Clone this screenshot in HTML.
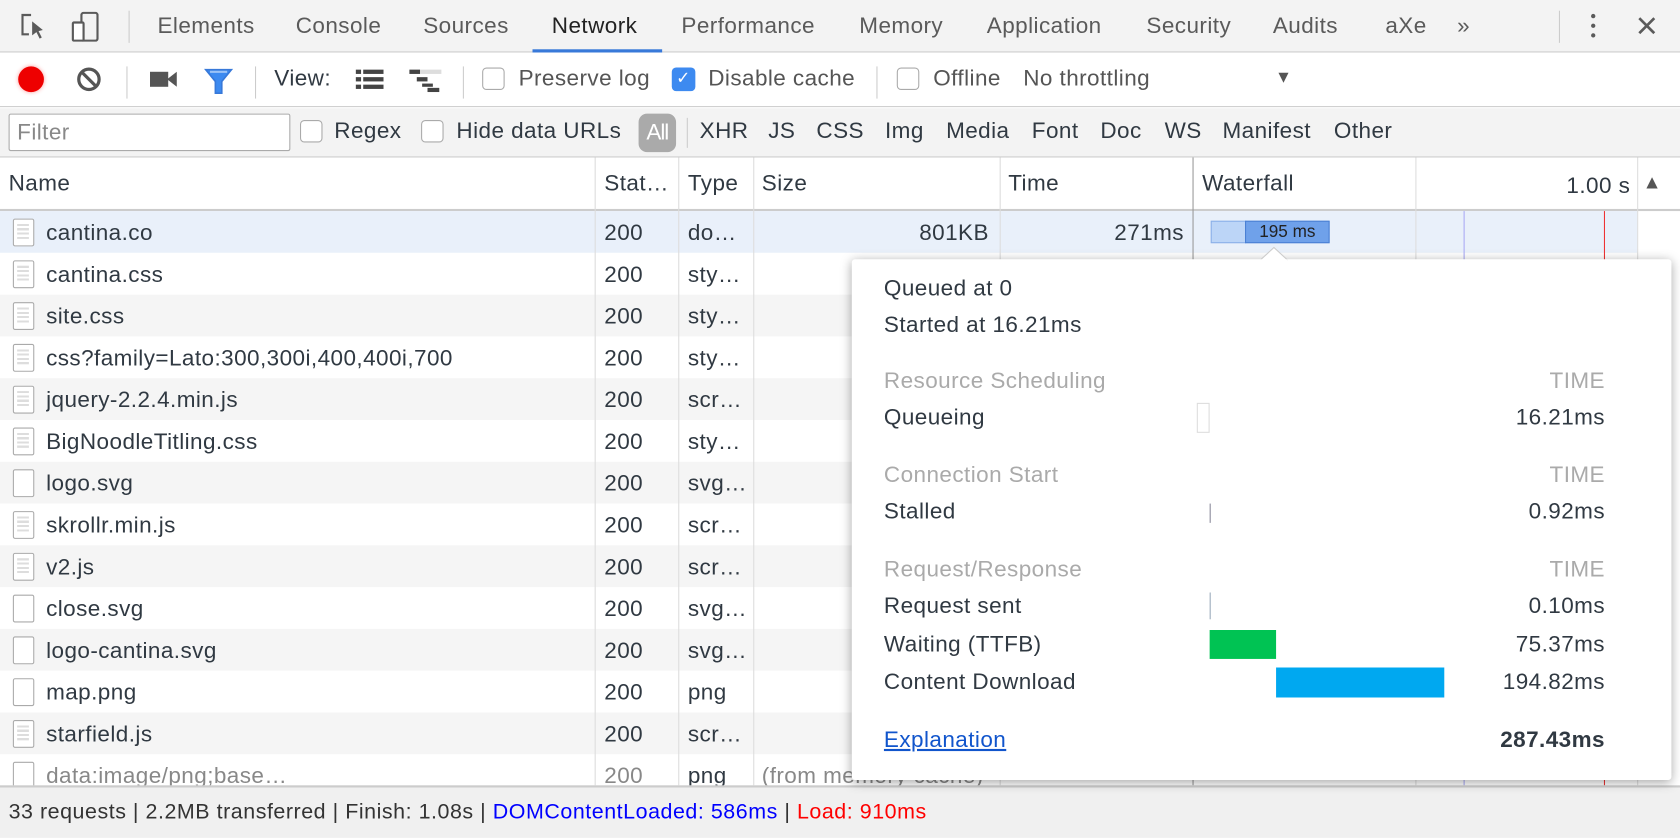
<!DOCTYPE html>
<html><head><meta charset="utf-8"><style>
*{box-sizing:border-box;margin:0;padding:0}
html,body{width:1680px;height:838px;overflow:hidden;background:#fff}
#w{position:absolute;left:0;top:0;width:1568px;height:782px;transform:scale(1.07143);transform-origin:0 0;font-family:"Liberation Sans",Arial,sans-serif;font-size:21px;letter-spacing:0.4px;color:#303942}
.a{position:absolute;white-space:nowrap}
.tab{position:absolute;top:1px;height:48px;line-height:48px;color:#5a5a5a}
.cb{position:absolute;width:21px;height:21px;border:1px solid #aaa;border-radius:4px;background:#fff}
.vl{position:absolute;width:1px;background:#ccc}
.row{position:absolute;left:0;width:1528px;height:39px;line-height:39px}
.c{position:absolute;top:1px;white-space:nowrap;overflow:hidden}
.ic{position:absolute;left:12px;top:7px;width:20px;height:26px;border:1.5px solid #aaa;background:#fff;border-radius:2px}
.ic.t::after{content:"";position:absolute;left:3px;top:4px;width:11px;height:14px;background:repeating-linear-gradient(#ddd 0 2px,transparent 2px 4px)}
.pl{position:absolute;left:30px;white-space:nowrap;line-height:24px}
.pr{position:absolute;right:62px;white-space:nowrap;line-height:24px}
.g{color:#aaa}
</style></head><body><div id="w">
<div class="a" style="left:0;top:0;width:1568px;height:49px;background:#f3f3f3;border-bottom:1px solid #ccc"></div>
<svg class="a" style="left:18px;top:12px" width="28" height="26" viewBox="0 0 28 26"><path d="M11 2H3v18h6" fill="none" stroke="#5a5a5a" stroke-width="2"/><path d="M12 8l10 8-4 1 3 6-2 1-3-6-4 3z" fill="#5a5a5a"/></svg>
<svg class="a" style="left:66px;top:11px" width="30" height="28" viewBox="0 0 30 28"><rect x="10" y="1" width="15" height="26" rx="2" fill="none" stroke="#5a5a5a" stroke-width="2"/><rect x="2" y="10" width="10" height="17" rx="1" fill="#fff" stroke="#5a5a5a" stroke-width="2"/></svg>
<div class="vl" style="left:120px;top:10px;height:30px"></div>
<div class="tab" style="left:147px">Elements</div>
<div class="tab" style="left:276px">Console</div>
<div class="tab" style="left:395px">Sources</div>
<div class="tab" style="left:515px;color:#222">Network</div>
<div class="a" style="left:497px;top:46px;width:121px;height:3px;background:#3879d9"></div>
<div class="tab" style="left:636px">Performance</div>
<div class="tab" style="left:802px">Memory</div>
<div class="tab" style="left:921px">Application</div>
<div class="tab" style="left:1070px">Security</div>
<div class="tab" style="left:1188px">Audits</div>
<div class="tab" style="left:1293px">aXe</div>
<div class="tab" style="left:1360px">»</div>
<div class="vl" style="left:1455px;top:10px;height:30px"></div>
<div class="a" style="left:1485px;top:13px;width:4px;height:4px;border-radius:2px;background:#5a5a5a;box-shadow:0 9px #5a5a5a,0 18px #5a5a5a"></div>
<svg class="a" style="left:1528px;top:15px" width="18" height="18"><path d="M2 2L16 16M16 2L2 16" stroke="#5a5a5a" stroke-width="2.5"/></svg>
<div class="a" style="left:0;top:49px;width:1568px;height:51px;background:#fff;border-bottom:1px solid #ccc"></div>
<div class="a" style="left:17px;top:62px;width:24px;height:24px;border-radius:12px;background:#e00;box-shadow:0 0 4px #f99"></div>
<svg class="a" style="left:71px;top:62px" width="24" height="24"><circle cx="12" cy="12" r="9.5" fill="none" stroke="#555" stroke-width="3"/><path d="M5 5L19 19" stroke="#555" stroke-width="3"/></svg>
<div class="vl" style="left:118px;top:62px;height:30px"></div>
<svg class="a" style="left:140px;top:65px" width="26" height="18"><rect x="0" y="2" width="17" height="14" fill="#555"/><path d="M16 9L25 2V16z" fill="#555"/></svg>
<svg class="a" style="left:190px;top:63px" width="28" height="26"><path d="M2 2H26L17 13V24H11V13z" fill="#3d8af0" stroke="#3879d9" stroke-width="1.5"/><path d="M6 4H22" stroke="#9cc3f7" stroke-width="2"/></svg>
<div class="vl" style="left:238px;top:62px;height:30px"></div>
<div class="a" style="left:256px;top:62px">View:</div>
<svg class="a" style="left:332px;top:64px" width="26" height="22" fill="#444"><rect x="0" y="1" width="5" height="4"/><rect x="7" y="1" width="19" height="4"/><rect x="0" y="8" width="5" height="4"/><rect x="7" y="8" width="19" height="4"/><rect x="0" y="15" width="5" height="4"/><rect x="7" y="15" width="19" height="4"/></svg>
<svg class="a" style="left:382px;top:64px" width="30" height="22"><rect x="0" y="1" width="30" height="4" fill="#ddd"/><rect x="0" y="1" width="10" height="4" fill="#444"/><rect x="7" y="8" width="10" height="4" fill="#444"/><rect x="12" y="14" width="10" height="3" fill="#444"/><rect x="17" y="18" width="11" height="4" fill="#444"/></svg>
<div class="vl" style="left:432px;top:62px;height:30px"></div>
<div class="cb" style="left:450px;top:63px"></div>
<div class="a" style="left:484px;top:62px;color:#555">Preserve log</div>
<div class="a" style="left:627px;top:63px;width:22px;height:22px;border-radius:4px;background:#3d8af0;color:#fff;font-size:16px;line-height:22px;text-align:center">✓</div>
<div class="a" style="left:661px;top:62px;color:#555">Disable cache</div>
<div class="vl" style="left:818px;top:62px;height:30px"></div>
<div class="cb" style="left:837px;top:63px"></div>
<div class="a" style="left:871px;top:62px;color:#555">Offline</div>
<div class="a" style="left:955px;top:62px;color:#555">No throttling</div>
<div class="a" style="left:1190px;top:64px;color:#555;font-size:16px">▼</div>
<div class="a" style="left:0;top:101px;width:1568px;height:46px;background:#f3f3f3;border-bottom:1px solid #ccc"></div>
<div class="a" style="left:8px;top:106px;width:263px;height:35px;border:1px solid #aaa;border-radius:2px;background:#fff;color:#888;line-height:33px;padding-left:7px">Filter</div>
<div class="cb" style="left:280px;top:112px"></div>
<div class="a" style="left:312px;top:111px">Regex</div>
<div class="cb" style="left:393px;top:112px"></div>
<div class="a" style="left:426px;top:111px">Hide data URLs</div>
<div class="a" style="left:596px;top:106px;width:35px;height:36px;border-radius:8px;background:#aaa;color:#fff;line-height:36px;text-align:center;letter-spacing:-1px">All</div>
<div class="vl" style="left:641px;top:110px;height:28px"></div>
<div class="a" style="left:653px;top:111px">XHR</div>
<div class="a" style="left:717px;top:111px">JS</div>
<div class="a" style="left:762px;top:111px">CSS</div>
<div class="a" style="left:826px;top:111px">Img</div>
<div class="a" style="left:883px;top:111px">Media</div>
<div class="a" style="left:963px;top:111px">Font</div>
<div class="a" style="left:1027px;top:111px">Doc</div>
<div class="a" style="left:1087px;top:111px">WS</div>
<div class="a" style="left:1141px;top:111px">Manifest</div>
<div class="a" style="left:1245px;top:111px">Other</div>
<div class="a" style="left:0;top:147px;width:1568px;height:50px;background:#fff;border-bottom:2px solid #ccc"></div>
<div class="a" style="left:8px;top:160px">Name</div>
<div class="a" style="left:564px;top:160px;width:66px;overflow:hidden">Stat…</div>
<div class="a" style="left:642px;top:160px">Type</div>
<div class="a" style="left:711px;top:160px">Size</div>
<div class="a" style="left:941px;top:160px">Time</div>
<div class="a" style="left:1122px;top:160px">Waterfall</div>
<div class="a" style="left:1462px;top:162px">1.00 s</div>
<div class="a" style="left:1533px;top:160px;font-size:18px;color:#555">▲</div>
<div id="rows"></div>
<div class="vl" style="left:555px;top:147px;height:586px;background:#ddd"></div>
<div class="vl" style="left:633px;top:147px;height:586px;background:#ddd"></div>
<div class="vl" style="left:703px;top:147px;height:586px;background:#ddd"></div>
<div class="vl" style="left:933px;top:147px;height:586px;background:#ddd"></div>
<div class="vl" style="left:1113px;top:147px;height:586px;background:#999"></div>
<div class="vl" style="left:1321px;top:147px;height:586px;background:#ddd"></div>
<div class="vl" style="left:1366px;top:197px;height:536px;background:#a9a9f5"></div>
<div class="vl" style="left:1497px;top:197px;height:536px;background:#e33"></div>
<div class="vl" style="left:1528px;top:147px;height:586px;background:#ddd"></div>
<div class="a" style="left:1130px;top:206px;width:33px;height:21px;background:#bcd5f7;border:1px solid #8bb0e8"></div>
<div class="a" style="left:1162px;top:206px;width:79px;height:21px;background:#6fa1ea;border:1px solid #4a80d4;font-size:16px;line-height:19px;text-align:center;color:#222;letter-spacing:0">195 ms</div>
<div class="a" style="left:0;top:733px;width:1568px;height:49px;background:#f0f0f0;border-top:2px solid #ccc;line-height:47px;padding-left:8px;font-size:20px;letter-spacing:0.5px;color:#333">33 requests | 2.2MB transferred | Finish: 1.08s | <span style="color:#00f">DOMContentLoaded: 586ms</span> | <span style="color:#f00">Load: 910ms</span></div>
<div class="a" style="left:795px;top:242px;width:765px;height:486px;background:#fff;border-radius:3px;box-shadow:0 2px 10px rgba(0,0,0,.35)">
<div class="pl" style="top:16px">Queued at 0</div>
<div class="pl" style="top:50px">Started at 16.21ms</div>
<div class="pl g" style="top:102px">Resource Scheduling</div><div class="pr g" style="top:102px">TIME</div>
<div class="pl" style="top:136px">Queueing</div><div class="pr" style="top:136px">16.21ms</div>
<div class="pl g" style="top:190px">Connection Start</div><div class="pr g" style="top:190px">TIME</div>
<div class="pl" style="top:224px">Stalled</div><div class="pr" style="top:224px">0.92ms</div>
<div class="pl g" style="top:278px">Request/Response</div><div class="pr g" style="top:278px">TIME</div>
<div class="pl" style="top:312px">Request sent</div><div class="pr" style="top:312px">0.10ms</div>
<div class="pl" style="top:348px">Waiting (TTFB)</div><div class="pr" style="top:348px">75.37ms</div>
<div class="pl" style="top:383px">Content Download</div><div class="pr" style="top:383px">194.82ms</div>
<div class="pl" style="top:437px;color:#1155cc;text-decoration:underline">Explanation</div><div class="pr" style="top:437px;font-weight:bold">287.43ms</div>
<div class="a" style="left:322px;top:134px;width:12px;height:28px;border:1px solid #ddd"></div>
<div class="a" style="left:334px;top:228px;width:1px;height:18px;background:#889"></div>
<div class="a" style="left:334px;top:311px;width:1px;height:25px;background:#9ab"></div>
<div class="a" style="left:334px;top:346px;width:62px;height:27px;background:#00c353"></div>
<div class="a" style="left:396px;top:381px;width:157px;height:28px;background:#00a8f0"></div>
</div>
<svg class="a" style="left:1176px;top:230px" width="26" height="14"><path d="M0 13L13 1L26 13" fill="#fff" stroke="#ccc"/><rect x="0" y="12" width="26" height="3" fill="#fff"/></svg>
</div>
<script>
var d=[["cantina.co","do…","t"],["cantina.css","sty…","t"],["site.css","sty…","t"],["css?family=Lato:300,300i,400,400i,700","sty…","t"],["jquery-2.2.4.min.js","scr…","t"],["BigNoodleTitling.css","sty…","t"],["logo.svg","svg…",""],["skrollr.min.js","scr…","t"],["v2.js","scr…","t"],["close.svg","svg…",""],["logo-cantina.svg","svg…",""],["map.png","png",""],["starfield.js","scr…","t"],["data:image/png;base…","png",""]];
var h="";d.forEach(function(r,i){var bg=i==0?"#e9f0fa":(i%2==0?"#f5f5f5":"#fff");var top=197+i*39;var gc=i==13?"color:#888;":"";
h+='<div class="row" style="top:'+top+'px;background:'+bg+';'+(i==13?'height:36px;overflow:hidden;':'')+'"><div class="ic '+r[2]+'"></div><div class="c" style="left:43px;width:505px;'+gc+'">'+r[0]+'</div><div class="c" style="left:564px;'+gc+'">200</div><div class="c" style="left:642px;width:62px">'+r[1]+'</div>'+(i==0?'<div class="c" style="left:703px;width:220px;text-align:right">801KB</div><div class="c" style="left:933px;width:172px;text-align:right">271ms</div>':'')+(i==13?'<div class="c" style="left:711px;color:#888">(from memory cache)</div>':'')+'</div>';});
document.getElementById("rows").innerHTML=h;
</script>
</body></html>
